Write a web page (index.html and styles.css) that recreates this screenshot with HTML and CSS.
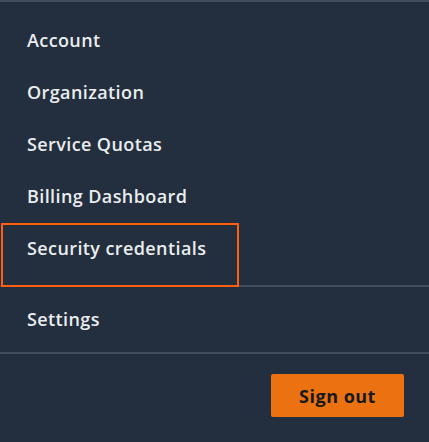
FILE: index.html
```html
<!DOCTYPE html>
<html lang="en">
<head>
    <meta charset="UTF-8">
    <title>Account menu</title>
    <link rel="stylesheet" href="styles.css">
</head>
<body>
    <div class="account-menu">
        <nav class="menu-group">
            <a class="menu-item" href="#">Account</a>
            <a class="menu-item" href="#">Organization</a>
            <a class="menu-item" href="#">Service Quotas</a>
            <a class="menu-item" href="#">Billing Dashboard</a>
            <a class="menu-item focused" href="#">Security credentials</a>
        </nav>
        <nav class="menu-group settings-group">
            <a class="menu-item" href="#">Settings</a>
        </nav>
        <div class="menu-footer">
            <button type="button" class="btn-signout">Sign out</button>
        </div>
    </div>
</body>
</html>
```

FILE: styles.css
```css
:root {
    --navy: #232f3e;
    --divider: #414d5c;
    --text: #eaeded;
    --orange: #ec7211;
    --focus: #ff5f0a;
    --dark: #16191f;
}

*, *::before, *::after {
    margin: 0;
    padding: 0;
    box-sizing: border-box;
}

body {
    background-color: var(--navy);
    font-family: "Open Sans", sans-serif;
    min-height: 100vh;
}

.account-menu {
    border-top: 2px solid var(--divider);
}

.menu-group {
    padding: 12px 0 11px;
    border-bottom: 2px solid var(--divider);
}

.settings-group {
    padding: 6px 0 7px;
}

.menu-item {
    display: block;
    width: 240px;
    padding: 16px 26px 16px 27px;
    font-size: 18px;
    font-weight: 600;
    letter-spacing: 0.4px;
    line-height: 20px;
    color: var(--text);
    text-decoration: none;
    position: relative;
}

/* focus ring sits over the divider below */
.menu-item.focused::after {
    content: '';
    position: absolute;
    top: 1px;
    left: 1px;
    width: 238px;
    bottom: -13px;
    border: 2px solid var(--focus);
    z-index: 1;
}

.menu-footer {
    display: flex;
    justify-content: flex-end;
    padding: 20px 25px 0 0;
}

.btn-signout {
    width: 133px;
    height: 43px;
    background-color: var(--orange);
    color: var(--dark);
    border: none;
    border-radius: 2px;
    font-family: "Open Sans", sans-serif;
    font-size: 18px;
    font-weight: 700;
    letter-spacing: 0.5px;
    cursor: pointer;
}
```
